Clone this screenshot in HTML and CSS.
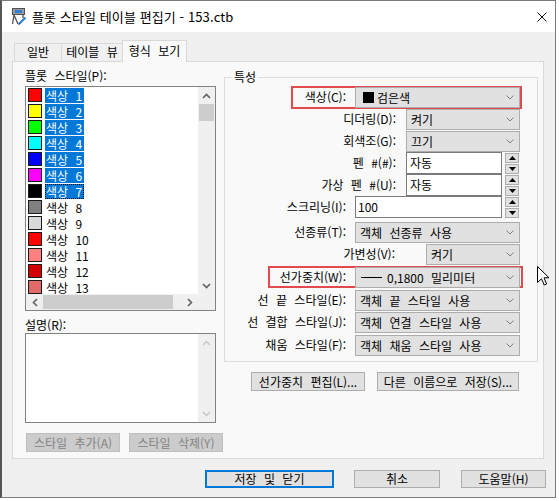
FILE: index.html
```html
<!DOCTYPE html>
<html lang="ko">
<head>
<meta charset="utf-8">
<title>플롯 스타일 테이블 편집기</title>
<link rel="stylesheet" href="styles.css">
</head>
<body>
<div class="window">
  <div class="titlebar">
    <svg class="appicon" width="16" height="17" viewBox="0 0 16 17">
      <rect x="1.5" y="0.5" width="12" height="6" fill="#9a9a9a" stroke="#505050"/>
      <rect x="4" y="2" width="7" height="3" fill="#2f7fd6"/>
      <path d="M3 7 L1.5 16 M3 7 L7 16 M12 7 L12 10" stroke="#505050" stroke-width="1.3" fill="none"/>
      <path d="M8.5 15.5 L14.5 9.5" stroke="#2f7fd6" stroke-width="2.2"/>
      <path d="M7.5 16.5 L8.8 15.2" stroke="#1a4f8f" stroke-width="1.5"/>
    </svg>
    <span class="title">플롯 스타일 테이블 편집기 - 153.ctb</span>
    <svg class="close" width="10" height="10" viewBox="0 0 10 10">
      <path d="M0.5 0.5 L9.5 9.5 M9.5 0.5 L0.5 9.5" stroke="#111" stroke-width="1"/>
    </svg>
  </div>

  <div class="tabs">
    <div class="tab">일반</div>
    <div class="tab t2">테이블 뷰</div>
    <div class="tab t3 active">형식 보기</div>
  </div>

  <div class="panel">
    <div class="left">
      <div class="lbl">플롯 스타일(P):</div>
      <div class="plist">
        <div class="items">
          <div class="item"><i class="sw" style="background:#ff0000"></i><span class="sel">색상 1</span></div>
          <div class="item"><i class="sw" style="background:#ffff00"></i><span class="sel">색상 2</span></div>
          <div class="item"><i class="sw" style="background:#00ff00"></i><span class="sel">색상 3</span></div>
          <div class="item"><i class="sw" style="background:#00ffff"></i><span class="sel">색상 4</span></div>
          <div class="item"><i class="sw" style="background:#0000ff"></i><span class="sel">색상 5</span></div>
          <div class="item"><i class="sw" style="background:#ff00ff"></i><span class="sel">색상 6</span></div>
          <div class="item"><i class="sw" style="background:#000000"></i><span class="sel focus">색상 7</span></div>
          <div class="item"><i class="sw" style="background:#808080"></i><span>색상 8</span></div>
          <div class="item"><i class="sw" style="background:#d9d9d9"></i><span>색상 9</span></div>
          <div class="item"><i class="sw" style="background:#ff0000"></i><span>색상 10</span></div>
          <div class="item"><i class="sw" style="background:#ff8080"></i><span>색상 11</span></div>
          <div class="item"><i class="sw" style="background:#d40000"></i><span>색상 12</span></div>
          <div class="item"><i class="sw" style="background:#e06a6a"></i><span>색상 13</span></div>
        </div>
        <div class="vscroll">
          <div class="arrow"><svg width="9" height="6" viewBox="0 0 9 6"><path d="M1 5 L4.5 1.5 L8 5" stroke="#606060" stroke-width="1.6" fill="none"/></svg></div>
          <div class="thumb v"></div>
          <div class="track"></div>
          <div class="arrow"><svg width="9" height="6" viewBox="0 0 9 6"><path d="M1 1 L4.5 4.5 L8 1" stroke="#606060" stroke-width="1.6" fill="none"/></svg></div>
        </div>
        <div class="hscroll">
          <div class="arrow h"><svg width="6" height="9" viewBox="0 0 6 9"><path d="M5 1 L1.5 4.5 L5 8" stroke="#606060" stroke-width="1.6" fill="none"/></svg></div>
          <div class="thumb hz"></div>
          <div class="track"></div>
          <div class="arrow h"><svg width="6" height="9" viewBox="0 0 6 9"><path d="M1 1 L4.5 4.5 L1 8" stroke="#606060" stroke-width="1.6" fill="none"/></svg></div>
        </div>
        <div class="corner"></div>
      </div>

      <div class="lbl desc-lbl">설명(R):</div>
      <div class="desc">
        <div class="desc-text"></div>
        <div class="vscroll">
          <div class="arrow"><svg width="9" height="6" viewBox="0 0 9 6"><path d="M1 5 L4.5 1.5 L8 5" stroke="#c4c4c4" stroke-width="1.3" fill="none"/></svg></div>
          <div class="track"></div>
          <div class="arrow"><svg width="9" height="6" viewBox="0 0 9 6"><path d="M1 1 L4.5 4.5 L8 1" stroke="#c4c4c4" stroke-width="1.3" fill="none"/></svg></div>
        </div>
      </div>

      <div class="lbtns">
        <div class="btn disabled">스타일 추가(A)</div>
        <div class="btn disabled">스타일 삭제(Y)</div>
      </div>
    </div>

    <div class="right">
      <fieldset class="group">
        <legend>특성</legend>

        <div class="row">
          <span class="hl hl1"></span>
          <label>색상(C):</label>
          <div class="combo"><i class="blk"></i>검은색<svg class="chev" width="8" height="5" viewBox="0 0 8 5"><path d="M0.5 0.5 L4 4 L7.5 0.5" stroke="#808080" fill="none"/></svg></div>
        </div>
        <div class="row n">
          <label>디더링(D):</label>
          <div class="combo">켜기<svg class="chev" width="8" height="5" viewBox="0 0 8 5"><path d="M0.5 0.5 L4 4 L7.5 0.5" stroke="#808080" fill="none"/></svg></div>
        </div>
        <div class="row n">
          <label>회색조(G):</label>
          <div class="combo">끄기<svg class="chev" width="8" height="5" viewBox="0 0 8 5"><path d="M0.5 0.5 L4 4 L7.5 0.5" stroke="#808080" fill="none"/></svg></div>
        </div>
        <div class="row n">
          <label>펜 #(#):</label>
          <div class="field">자동</div>
          <div class="spin"><div class="sb"><svg width="7" height="4" viewBox="0 0 7 4"><path d="M0 4 L3.5 0 L7 4Z" fill="#000"/></svg></div><div class="sb"><svg width="7" height="4" viewBox="0 0 7 4"><path d="M0 0 L3.5 4 L7 0Z" fill="#000"/></svg></div></div>
        </div>
        <div class="row n">
          <label>가상 펜 #(U):</label>
          <div class="field">자동</div>
          <div class="spin"><div class="sb"><svg width="7" height="4" viewBox="0 0 7 4"><path d="M0 4 L3.5 0 L7 4Z" fill="#000"/></svg></div><div class="sb"><svg width="7" height="4" viewBox="0 0 7 4"><path d="M0 0 L3.5 4 L7 0Z" fill="#000"/></svg></div></div>
        </div>
        <div class="row">
          <label>스크리닝(I):</label>
          <div class="field wide">100</div>
          <div class="spin"><div class="sb"><svg width="7" height="4" viewBox="0 0 7 4"><path d="M0 4 L3.5 0 L7 4Z" fill="#000"/></svg></div><div class="sb"><svg width="7" height="4" viewBox="0 0 7 4"><path d="M0 0 L3.5 4 L7 0Z" fill="#000"/></svg></div></div>
        </div>
        <div class="row mt3">
          <label>선종류(T):</label>
          <div class="combo">객체 선종류 사용<svg class="chev" width="8" height="5" viewBox="0 0 8 5"><path d="M0.5 0.5 L4 4 L7.5 0.5" stroke="#808080" fill="none"/></svg></div>
        </div>
        <div class="row v">
          <label>가변성(V):</label>
          <div class="combo">켜기<svg class="chev" width="8" height="5" viewBox="0 0 8 5"><path d="M0.5 0.5 L4 4 L7.5 0.5" stroke="#808080" fill="none"/></svg></div>
        </div>
        <div class="row mt1">
          <span class="hl hl2"></span>
          <label>선가중치(W):</label>
          <div class="combo"><i class="lw"></i>0,1800 밀리미터<svg class="chev" width="8" height="5" viewBox="0 0 8 5"><path d="M0.5 0.5 L4 4 L7.5 0.5" stroke="#808080" fill="none"/></svg></div>
        </div>
        <div class="row mt1">
          <label>선 끝 스타일(E):</label>
          <div class="combo">객체 끝 스타일 사용<svg class="chev" width="8" height="5" viewBox="0 0 8 5"><path d="M0.5 0.5 L4 4 L7.5 0.5" stroke="#808080" fill="none"/></svg></div>
        </div>
        <div class="row">
          <label>선 결합 스타일(J):</label>
          <div class="combo">객체 연결 스타일 사용<svg class="chev" width="8" height="5" viewBox="0 0 8 5"><path d="M0.5 0.5 L4 4 L7.5 0.5" stroke="#808080" fill="none"/></svg></div>
        </div>
        <div class="row mt1">
          <label>채움 스타일(F):</label>
          <div class="combo">객체 채움 스타일 사용<svg class="chev" width="8" height="5" viewBox="0 0 8 5"><path d="M0.5 0.5 L4 4 L7.5 0.5" stroke="#808080" fill="none"/></svg></div>
        </div>
      </fieldset>

      <div class="rbtns">
        <div class="btn b1">선가중치 편집(L)...</div>
        <div class="btn b2">다른 이름으로 저장(S)...</div>
      </div>
    </div>
  </div>

  <div class="bottom">
    <div class="btn default">저장 및 닫기</div>
    <div class="btn cancel">취소</div>
    <div class="btn help">도움말(H)</div>
  </div>

  <svg class="cursor" width="13" height="20" viewBox="0 0 13 20">
    <path d="M0.5 0.5 L0.5 16.5 L4.5 12.8 L7.2 19 L9.6 18 L7 11.8 L12 11.8 Z" fill="#fff" stroke="#000" stroke-width="1" stroke-linejoin="miter"/>
  </svg>
</div>
</body>
</html>
```

FILE: styles.css
```css
* { box-sizing: border-box; }

body {
  margin: 0;
  background: #ffffff;
  font-family: "Noto Sans CJK KR", "Noto Sans", sans-serif;
  font-size: 12px;
  word-spacing: 4px;
  color: #000;
}

.window {
  position: relative;
  width: 556px;
  height: 498px;
  border: 1px solid #7a7a7a;
  border-left: 2px solid #565656;
  background: #f0f0f0;
}

.titlebar {
  height: 31px;
  background: #ffffff;
  display: flex;
  align-items: center;
  padding-left: 9px;
}

.appicon { flex: none; }

.title {
  margin-left: 5px;
  font-size: 13px;
  line-height: 16px;
  letter-spacing: 0.1px;
  word-spacing: 0;
  color: #000;
}

.close {
  margin-left: auto;
  margin-right: 8px;
}

.tabs {
  margin-top: 8px;
  height: 21px;
  display: flex;
  align-items: flex-end;
  padding-left: 12px;
}

.tab {
  height: 18px;
  line-height: 16px;
  border: 1px solid #d9d9d9;
  border-bottom: none;
  background: #f0f0f0;
  text-align: center;
  width: 48px;
  white-space: nowrap;
}

.tab.t2 { width: 62px; margin-left: -1px; }
.tab.t3 { width: 65px; margin-left: -1px; }

.tab.active {
  position: relative;
  z-index: 1;
  height: 22px;
  margin-bottom: -1px;
  line-height: 19px;
  background: #f9f9f9;
  border-color: #d9d9d9;
}

.panel {
  margin-left: 10px;
  width: 532px;
  height: 398px;
  border: 1px solid #d9d9d9;
  background: #f9f9f9;
  padding: 7px 0 0 12px;
  display: flex;
}

.left {
  flex: none;
  width: 199px;
}

.lbl {
  line-height: 14px;
  height: 14px;
  white-space: nowrap;
}

.plist {
  margin-top: 3px;
  width: 191px;
  height: 225px;
  border: 1px solid #828282;
  background: #fff;
  display: grid;
  grid-template-columns: 1fr 17px;
  grid-template-rows: 1fr 16px;
}

.items {
  overflow: hidden;
}

.item {
  height: 16px;
  display: flex;
  align-items: center;
  padding-left: 2px;
}

.sw {
  flex: none;
  width: 14px;
  height: 14px;
  border: 1px solid #1a1a1a;
  margin-right: 3px;
}

.item span {
  height: 15px;
  line-height: 15px;
  padding: 0 2px 0 1px;
  white-space: nowrap;
}

.item span.sel {
  background: #0078d7;
  color: #fff;
}

.item span.focus {
  outline: 1px dotted #000;
  outline-offset: -1px;
}

.vscroll {
  background: #f0f0f0;
  display: flex;
  flex-direction: column;
}

.arrow {
  flex: none;
  height: 17px;
  display: flex;
  align-items: center;
  justify-content: center;
}

.arrow.h {
  width: 17px;
  height: auto;
}

.track { flex: 1; }

.thumb.v {
  flex: none;
  height: 17px;
  margin: 0 1px;
  background: #cdcdcd;
}

.hscroll {
  background: #f0f0f0;
  display: flex;
}

.thumb.hz {
  flex: none;
  width: 130px;
  margin: 1px 0;
  background: #cdcdcd;
}

.corner { background: #f0f0f0; }

.desc-lbl { margin-top: 7px; }

.desc {
  margin-top: 1px;
  width: 191px;
  height: 90px;
  border: 1px solid #828282;
  background: #fff;
  display: grid;
  grid-template-columns: 1fr 17px;
}

.lbtns {
  margin-top: 10px;
  margin-left: 1px;
  display: flex;
  gap: 9px;
}

.btn {
  height: 19px;
  line-height: 17px;
  border: 1px solid #adadad;
  background: #e1e1e1;
  text-align: center;
  white-space: nowrap;
}

.btn.disabled {
  width: 94px;
  background: #cccccc;
  border-color: #bfbfbf;
  color: #838383;
}

.right {
  flex: none;
  width: 314px;
}

.group {
  margin: 1px 0 0 0;
  padding: 2px 0 5px 0;
  border: 1px solid #dcdcdc;
  min-width: 0;
  width: 314px;
}

.group legend {
  margin-left: 7px;
  padding: 0 2px;
  line-height: 14px;
  font-size: 12px;
}

.row {
  position: relative;
  height: 22px;
  display: flex;
  align-items: center;
}

.row.mt1 { margin-top: 1px; }
.row.mt3 { margin-top: 3px; }

.row label {
  flex: none;
  width: 121px;
  margin-right: 9px;
  text-align: right;
  line-height: 14px;
  white-space: nowrap;
}

.row.n label { width: 171px; margin-right: 10px; }
.row.v label { width: 170px; margin-right: 31px; }

.combo {
  position: relative;
  flex: none;
  width: 165px;
  height: 21px;
  line-height: 19px;
  border: 1px solid #adadad;
  background: #e1e1e1;
  padding-left: 4px;
  display: flex;
  align-items: center;
  white-space: pre;
}

.row.n .combo { width: 114px; }
.row.v .combo { width: 94px; }

.chev {
  margin-left: auto;
  margin-right: 5px;
  flex: none;
}

.blk {
  width: 11px;
  height: 11px;
  background: #000;
  margin: 0 3px 0 3px;
  flex: none;
}

.lw {
  width: 21px;
  height: 1px;
  background: #000;
  margin: 0 5px 0 1px;
  flex: none;
}

.field {
  flex: none;
  width: 96px;
  height: 22px;
  line-height: 20px;
  border: 1px solid #7a7a7a;
  background: #fff;
  padding-left: 3px;
}

.field.wide { width: 147px; padding-left: 2px; }

.spin {
  flex: none;
  margin-left: 3px;
  width: 14px;
  height: 21px;
  display: flex;
  flex-direction: column;
  gap: 1px;
}

.sb {
  flex: 1;
  border: 1px solid #adadad;
  background: #e1e1e1;
  display: flex;
  align-items: center;
  justify-content: center;
}

.hl {
  position: absolute;
  top: 0;
  border: 2px solid #e34a4e;
  pointer-events: none;
}

.hl1 { left: 66px; width: 231px; height: 23px; }
.hl2 { left: 43px; width: 255px; height: 22px; }

.rbtns {
  margin-top: 10px;
  padding-left: 27px;
  display: flex;
  gap: 12px;
}

.btn.b1 { width: 114px; }
.btn.b2 { width: 142px; }

.bottom {
  margin-top: 11px;
  padding-left: 203px;
  display: flex;
}

.bottom .btn { height: 18px; line-height: 16px; }

.btn.default {
  width: 129px;
  border: 2px solid #0078d7;
  line-height: 14px;
}

.btn.cancel { width: 86px; margin-left: 20px; }
.btn.help { width: 85px; margin-left: 21px; }

.cursor {
  position: absolute;
  left: 535px;
  top: 265px;
}
```
